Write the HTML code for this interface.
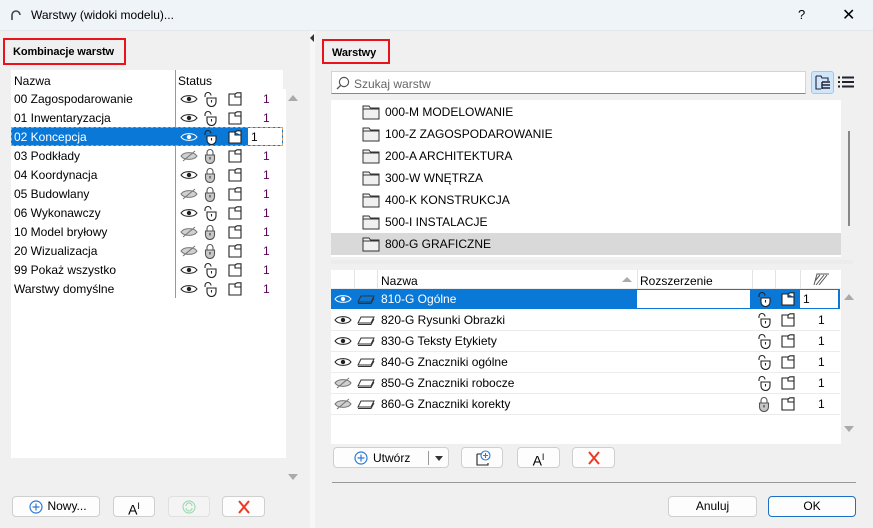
<!DOCTYPE html>
<html><head><meta charset="utf-8"><style>
*{box-sizing:border-box;margin:0;padding:0}
body{width:873px;height:528px;background:#f0f0f0;font-family:"Liberation Sans",sans-serif;font-size:12px;color:#000;position:relative;overflow:hidden}
.a{position:absolute}
.tb{left:0;top:0;width:873px;height:31px;background:#eff4f9;border-bottom:1px solid #e4e8ec}
.red{border:2px solid #e8141b;font-weight:bold;font-size:11px;padding:6px 0 0 8px;white-space:nowrap;letter-spacing:-0.1px}
.box{background:#fff}
.row{position:absolute;height:19px;line-height:21px;white-space:nowrap}
.btn{position:absolute;background:#fdfdfd;border:1px solid #cfcfcf;border-radius:4px;height:21px;text-align:center;line-height:19px;font-size:12px}
svg{position:absolute}
.num{color:#5a0055}
</style></head><body>
<svg width="0" height="0" style="position:absolute">
<defs>
<symbol id="eye" viewBox="0 0 18 12"><path d="M1 6C4 1.5 14 1.5 17 6C14 10.5 4 10.5 1 6Z" fill="none" stroke="#222" stroke-width="1.1"/><circle cx="9" cy="6" r="2.2" fill="#222"/></symbol>
<symbol id="eyew" viewBox="0 0 18 12"><path d="M1 6C4 1.5 14 1.5 17 6C14 10.5 4 10.5 1 6Z" fill="none" stroke="#fff" stroke-width="1.1"/><circle cx="9" cy="6" r="2.2" fill="#fff"/></symbol>
<symbol id="eyeoff" viewBox="0 0 18 12"><path d="M1 6C4 1.5 14 1.5 17 6C14 10.5 4 10.5 1 6Z" fill="#d0d0d0" stroke="#777" stroke-width="1.1"/><path d="M3 11L15 1" stroke="#777" stroke-width="1.1"/></symbol>
<symbol id="unl" viewBox="0 0 14 16"><path d="M2 6V4.5A3 3 0 0 1 8 4.5" fill="none" stroke="#222" stroke-width="1.1"/><path d="M4 7H13V11A4.5 4.5 0 0 1 4 11Z" fill="#fff" stroke="#222" stroke-width="1.1"/><path d="M8.5 9V11.5" stroke="#222" stroke-width="1.1"/></symbol>
<symbol id="lck" viewBox="0 0 14 16"><path d="M4 7V4.5A3 3 0 0 1 10 4.5V7" fill="none" stroke="#555" stroke-width="1.1"/><path d="M2.5 7H11.5V11A4.5 4.5 0 0 1 2.5 11Z" fill="#c8c8c8" stroke="#555" stroke-width="1.1"/><path d="M7 9V11.5" stroke="#333" stroke-width="1.1"/></symbol>
<symbol id="pg" viewBox="0 0 14 14"><path d="M1 2H7V5H13V13H1Z M7 2L9 0.8H13V5" fill="#fff" stroke="#222" stroke-width="1.1"/></symbol>
<symbol id="ly" viewBox="0 0 18 10"><path d="M4 2H17L14 8H1Z" fill="none" stroke="#333" stroke-width="1"/><path d="M1 9.5H14L17 4" fill="none" stroke="#333" stroke-width="1"/></symbol>
<symbol id="fd" viewBox="0 0 18 15"><path d="M1 1H7L8.5 3H17V14H1Z" fill="#f0f0f0" stroke="#333" stroke-width="1"/><path d="M1 4H17" stroke="#333" stroke-width="1"/></symbol>
</defs></svg>

<div class="a tb"></div>
<svg style="left:10px;top:9px" width="12" height="12" viewBox="0 0 12 12"><path d="M2 11V6A4 4 0 0 1 10 6" fill="none" stroke="#444" stroke-width="1.6"/></svg>
<div class="a" style="left:31px;top:8px;font-size:12px">Warstwy (widoki modelu)...</div>
<div class="a" style="left:798px;top:7px;font-size:13px">?</div>
<div class="a" style="left:842px;top:5px;font-size:16px">✕</div>

<div class="a red" style="left:3px;top:38px;width:123px;height:27px">Kombinacje warstw</div>
<div class="a" style="left:310px;top:31px;width:5px;height:497px;background:#f7f7f7"></div>
<div class="a" style="left:310px;top:34px;width:0;height:0;border-top:4px solid transparent;border-bottom:4px solid transparent;border-right:4px solid #333"></div>

<div class="a box" style="left:11px;top:70px;width:275px;height:388px"></div>
<div class="a" style="left:283px;top:70px;width:3px;height:19px;background:#f0f0f0"></div>
<div class="a" style="left:14px;top:74px">Nazwa</div>
<div class="a" style="left:178px;top:74px">Status</div>
<div class="a" style="left:175px;top:70px;width:1px;height:228px;background:#999"></div>
<div class="a" style="left:288px;top:95px;border-left:5px solid transparent;border-right:5px solid transparent;border-bottom:6px solid #aaa"></div>
<div class="a" style="left:288px;top:474px;border-left:5px solid transparent;border-right:5px solid transparent;border-top:6px solid #aaa"></div>

<div id="L"></div>

<div class="btn" style="left:12px;top:496px;width:88px"><svg style="left:16px;top:3px" width="14" height="14" viewBox="0 0 14 14"><circle cx="7" cy="7" r="6" fill="none" stroke="#2d7ad6" stroke-width="1.2"/><path d="M7 3.5V10.5M3.5 7H10.5" stroke="#2d7ad6" stroke-width="1.2"/></svg><span style="padding-left:22px">Nowy...</span></div>
<div class="btn" style="left:113px;top:496px;width:42px;font-size:14px">A<sup style="font-size:9px">I</sup></div>
<div class="btn" style="left:168px;top:496px;width:42px;background:#f4f4f4;border-color:#e0e0e0"><svg style="left:13px;top:3px" width="14" height="14" viewBox="0 0 14 14"><circle cx="7" cy="7" r="6" fill="none" stroke="#9fdcb4" stroke-width="1.2"/><path d="M4 6A3 3 0 0 1 10 6M10 8A3 3 0 0 1 4 8" fill="none" stroke="#9fdcb4" stroke-width="1.2"/></svg></div>
<div class="btn" style="left:222px;top:496px;width:43px"><svg style="left:14px;top:3px" width="14" height="14" viewBox="0 0 14 14"><path d="M2 1L12 13M12 1L2 13" stroke="#ee3a24" stroke-width="2"/></svg></div>

<!-- right -->
<div class="a red" style="left:322px;top:39px;width:68px;height:25px;padding-top:6px">Warstwy</div>
<div class="a box" style="left:331px;top:71px;width:475px;height:23px;border:1px solid #d4d4d4;border-bottom-color:#888"></div>
<svg style="left:336px;top:76px" width="14" height="14" viewBox="0 0 14 14"><circle cx="8" cy="6" r="4.6" fill="none" stroke="#555" stroke-width="1.2"/><path d="M4.6 9.4L1 13" stroke="#555" stroke-width="1.3"/></svg>
<div class="a" style="left:354px;top:77px;color:#666">Szukaj warstw</div>
<div class="a" style="left:811px;top:71px;width:23px;height:23px;background:#cfe6fb;border:1px solid #99c9f3;border-radius:3px"></div>
<svg style="left:815px;top:75px" width="16" height="15" viewBox="0 0 16 15"><path d="M1 1H6L7 3H13V6M1 1V14H6" fill="none" stroke="#223" stroke-width="1.1"/><path d="M7 7H15M7 10H15M7 13H15M7 7V14" stroke="#223" stroke-width="1.4"/></svg>
<svg style="left:838px;top:76px" width="16" height="12" viewBox="0 0 16 12"><path d="M0 1.5H2M4 1.5H16M0 6H2M4 6H16M0 10.5H2M4 10.5H16" stroke="#223" stroke-width="2"/></svg>

<div class="a box" style="left:331px;top:100px;width:510px;height:157px"></div>
<div class="a" style="left:331px;top:233px;width:510px;height:22px;background:#d9d9d9"></div>
<div class="a" style="left:848px;top:131px;width:2px;height:95px;background:#888"></div>
<div id="T"></div>
<div class="a" style="left:331px;top:260px;width:522px;height:4px;background:#ececec"></div>

<div class="a box" style="left:331px;top:270px;width:510px;height:174px"></div>
<div class="a" style="left:331px;top:270px;width:510px;height:19px;border-bottom:1px solid #eee"></div>
<div class="a" style="left:354px;top:270px;width:1px;height:19px;background:#e3e3e3"></div>
<div class="a" style="left:377px;top:270px;width:1px;height:19px;background:#e3e3e3"></div>
<div class="a" style="left:637px;top:270px;width:1px;height:19px;background:#e3e3e3"></div>
<div class="a" style="left:752px;top:270px;width:1px;height:19px;background:#e3e3e3"></div>
<div class="a" style="left:775px;top:270px;width:1px;height:19px;background:#e3e3e3"></div>
<div class="a" style="left:800px;top:270px;width:1px;height:19px;background:#e3e3e3"></div>
<div class="a" style="left:381px;top:274px">Nazwa</div>
<div class="a" style="left:622px;top:277px;border-left:5px solid transparent;border-right:5px solid transparent;border-bottom:5px solid #aaa"></div>
<div class="a" style="left:640px;top:274px">Rozszerzenie</div>
<svg style="left:813px;top:273px" width="17" height="12" viewBox="0 0 17 12"><path d="M1 12L4 1H16M2 8L7 2M3 12L11 2M6 12L14 2" fill="none" stroke="#555" stroke-width="1"/></svg>
<div class="a" style="left:844px;top:294px;border-left:5px solid transparent;border-right:5px solid transparent;border-bottom:6px solid #aaa"></div>
<div class="a" style="left:844px;top:426px;border-left:5px solid transparent;border-right:5px solid transparent;border-top:6px solid #aaa"></div>
<div id="R"></div>

<div class="btn" style="left:333px;top:447px;width:116px"><svg style="left:20px;top:3px" width="14" height="14" viewBox="0 0 14 14"><circle cx="7" cy="7" r="6" fill="none" stroke="#2d7ad6" stroke-width="1.2"/><path d="M7 3.5V10.5M3.5 7H10.5" stroke="#2d7ad6" stroke-width="1.2"/></svg><span class="a" style="left:39px;top:1px">Utwórz</span><span class="a" style="left:94px;top:3px;width:1px;height:14px;background:#999"></span><span class="a" style="left:101px;top:8px;border-left:4px solid transparent;border-right:4px solid transparent;border-top:5px solid #333"></span></div>
<div class="btn" style="left:461px;top:447px;width:42px"><svg style="left:13px;top:2px" width="16" height="16" viewBox="0 0 16 16"><path d="M2 4V15H13V13" fill="none" stroke="#222" stroke-width="1.1"/><path d="M2 4H6" stroke="#222"/><circle cx="10.5" cy="5.5" r="4.5" fill="#fff" stroke="#2d7ad6" stroke-width="1.1"/><path d="M10.5 3V8M8 5.5H13" stroke="#2d7ad6" stroke-width="1.1"/></svg></div>
<div class="btn" style="left:517px;top:447px;width:43px;font-size:14px">A<sup style="font-size:9px">I</sup></div>
<div class="btn" style="left:572px;top:447px;width:43px"><svg style="left:14px;top:3px" width="14" height="14" viewBox="0 0 14 14"><path d="M2 1L12 13M12 1L2 13" stroke="#ee3a24" stroke-width="2"/></svg></div>
<div class="a" style="left:332px;top:482px;width:524px;height:1px;background:#999"></div>
<div class="btn" style="left:668px;top:496px;width:89px">Anuluj</div>
<div class="btn" style="left:768px;top:496px;width:88px;border-color:#1c6fc7">OK</div>

<script>
var L=[["00 Zagospodarowanie",1,0],["01 Inwentaryzacja",1,0],["02 Koncepcja",1,0],["03 Podkłady",0,1],["04 Koordynacja",1,1],["05 Budowlany",0,1],["06 Wykonawczy",1,0],["10 Model bryłowy",0,1],["20 Wizualizacja",0,1],["99 Pokaż wszystko",1,0],["Warstwy domyślne",1,0]];
var h="";
L.forEach(function(r,i){var y=89+i*19,s=i==2;
if(s){h+='<div class="a" style="left:11px;top:'+y+'px;width:272px;height:19px;background:#0a78d7;border:1px dashed #e0a060"></div><div class="a" style="left:248px;top:'+(y+1)+'px;width:34px;height:17px;background:#fff"></div>';}
h+='<div class="row" style="left:14px;top:'+y+'px;color:'+(s?'#fff':'#000')+'">'+r[0]+'</div>';
h+='<svg style="left:180px;top:'+(y+4)+'px" width="18" height="12"><use href="#'+(r[1]?(s?'eyew':'eye'):'eyeoff')+'"/></svg>';
h+='<svg style="left:203px;top:'+(y+2)+'px" width="14" height="16"><use href="#'+(r[2]?'lck':'unl')+'"/></svg>';
h+='<svg style="left:228px;top:'+(y+3)+'px" width="14" height="14"><use href="#pg"/></svg>';
h+='<div class="row '+(s?'':'num')+'" style="left:'+(s?251:263)+'px;top:'+y+'px">1</div>';});
document.getElementById('L').innerHTML=h;
var T=["000-M MODELOWANIE","100-Z ZAGOSPODAROWANIE","200-A ARCHITEKTURA","300-W WNĘTRZA","400-K KONSTRUKCJA","500-I INSTALACJE","800-G GRAFICZNE"];h="";
T.forEach(function(t,i){var y=101+i*22;h+='<svg style="left:362px;top:'+(y+4)+'px" width="18" height="15"><use href="#fd"/></svg><div class="row" style="left:385px;top:'+(y+1)+'px;height:20px;line-height:21px">'+t+'</div>';});
document.getElementById('T').innerHTML=h;
var R=[["810-G Ogólne",1,0],["820-G Rysunki Obrazki",1,0],["830-G Teksty Etykiety",1,0],["840-G Znaczniki ogólne",1,0],["850-G Znaczniki robocze",0,0],["860-G Znaczniki korekty",0,1]];h="";
R.forEach(function(r,i){var y=289+i*21,s=i==0;
if(s){h+='<div class="a" style="left:331px;top:'+y+'px;width:509px;height:20px;background:#0a78d7"></div><div class="a" style="left:637px;top:'+(y+1)+'px;width:113px;height:18px;background:#fff"></div><div class="a" style="left:800px;top:'+(y+1)+'px;width:38px;height:18px;background:#fff"></div>';}
else h+='<div class="a" style="left:331px;top:'+(y+20)+'px;width:509px;height:1px;background:#ececec"></div>';
h+='<svg style="left:334px;top:'+(y+4)+'px" width="18" height="12"><use href="#'+(r[1]?(s?'eyew':'eye'):'eyeoff')+'"/></svg>';
h+='<svg style="left:357px;top:'+(y+5)+'px" width="18" height="10"><use href="#ly"/></svg>';
h+='<div class="row" style="left:381px;top:'+y+'px;height:20px;line-height:21px;color:'+(s?'#fff':'#000')+'">'+r[0]+'</div>';
h+='<svg style="left:757px;top:'+(y+2)+'px" width="14" height="16"><use href="#'+(r[2]?'lck':'unl')+'"/></svg>';
h+='<svg style="left:781px;top:'+(y+3)+'px" width="14" height="14"><use href="#pg"/></svg>';
h+='<div class="row" style="left:'+(s?803:818)+'px;top:'+y+'px;height:20px;line-height:21px">1</div>';});
document.getElementById('R').innerHTML=h;
</script>
</body></html>
